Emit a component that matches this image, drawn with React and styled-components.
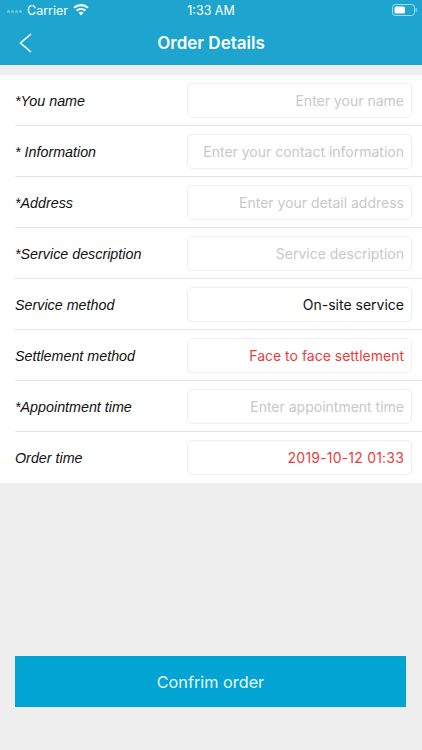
import React from 'react'
import styled, { createGlobalStyle } from 'styled-components'

const GlobalStyle = createGlobalStyle`
    html, body {
        margin: 0;
        padding: 0;
        background: #eeeeee;
        font-family: "Liberation Sans", Arial, sans-serif;
    }
    * {
        box-sizing: border-box;
    }
`

const Container = styled.div`
    width: 422px;
    height: 750px;
    display: flex;
    flex-direction: column;
    overflow: hidden;
`

const Header = styled.div`
    height: 65px;
    background-color: #1da5cf;
    color: white;
    flex-shrink: 0;
`

const StatusBar = styled.div`
    height: 20px;
    padding: 0 4px;
    display: grid;
    grid-template-columns: 1fr auto 1fr;
    align-items: center;
    font-size: 12.5px;
    font-family: Inter, sans-serif;
`

const StatusLeft = styled.div`
    display: flex;
    align-items: center;
    gap: 5px;
    padding-left: 3px;
`

const StatusRight = styled.div`
    display: flex;
    justify-content: flex-end;
`

const Dots = styled.div`
    display: flex;
    gap: 1px;
    margin-top: 3px;
`

const Dot = styled.span`
    width: 3px;
    height: 3px;
    border-radius: 50%;
    background-color: rgba(255, 255, 255, 0.35);
`

const NavBar = styled.div`
    height: 45px;
    position: relative;
    display: flex;
    align-items: center;
    justify-content: center;
`

const Back = styled.svg`
    position: absolute;
    left: 19px;
    top: 13px;
`

const Title = styled.div`
    font-size: 17px;
    font-weight: 600;
    font-family: Inter, sans-serif;
`

const Form = styled.div`
    margin-top: 10px;
    background-color: white;
    padding-left: 15px;
    flex-shrink: 0;
`

const Row = styled.div`
    height: 51px;
    display: flex;
    align-items: center;
    justify-content: space-between;
    padding-right: 10px;
    border-bottom: ${props => props.$last ? 'none' : '1px solid #e4e4e4'};
`

const Label = styled.span`
    font-size: 14.3px;
    font-style: italic;
    color: #111;
    margin-top: 1px;
`

const Field = styled.div`
    width: 225px;
    height: 35px;
    border: 1px solid #eeeeee;
    border-radius: 5px;
    padding: 0 7px;
    display: flex;
    align-items: center;
    justify-content: flex-end;
    font-size: 14px;
    font-family: Inter, sans-serif;
    letter-spacing: ${props => props.$spacing || 'normal'};
    color: ${props => props.$color || '#c8c8c8'};
`

const Footer = styled.div`
    flex: 1;
    display: flex;
    align-items: flex-end;
    padding: 0 16px 43px 15px;
`

const Button = styled.button`
    width: 100%;
    height: 51px;
    border: none;
    background-color: #02a4d3;
    color: #e6f7fc;
    font-size: 16.25px;
    font-family: Inter, sans-serif;
`

const Battery = () => (
    <svg width="26" height="12" viewBox="0 0 26 12">
        <rect x="0.5" y="0.5" width="22" height="11" rx="3" fill="none" stroke="white" strokeOpacity="0.6" />
        <rect x="2.5" y="2.5" width="10.5" height="7" rx="1.5" fill="white" />
        <rect x="23.5" y="4" width="1.2" height="4" rx="0.6" fill="white" fillOpacity="0.6" />
    </svg>
)

const Wifi = () => (
    <svg width="16" height="12" viewBox="0 0 16 12" fill="white">
        <path d="M8 11.5 L5.6 8.7 A3.6 3.6 0 0 1 10.4 8.7 Z" />
        <path d="M4.4 7.4 L3 5.8 A7.5 7.5 0 0 1 13 5.8 L11.6 7.4 A5.4 5.4 0 0 0 4.4 7.4 Z" />
        <path d="M1.9 4.5 L0.4 2.9 A11.4 11.4 0 0 1 15.6 2.9 L14.1 4.5 A9.3 9.3 0 0 0 1.9 4.5 Z" />
    </svg>
)

const rows = [
    { label: '*You name', value: 'Enter your name' },
    { label: '* Information', value: 'Enter your contact information' },
    { label: '*Address', value: 'Enter your detail address' },
    { label: '*Service description', value: 'Service description' },
    { label: 'Service method', value: 'On-site service', color: '#111' },
    { label: 'Settlement method', value: 'Face to face settlement', color: '#e8403c' },
    { label: '*Appointment time', value: 'Enter appointment time' },
    { label: 'Order time', value: '2019-10-12 01:33', color: '#e8403c', spacing: '0.2px' },
]

export default function App() {
    return (
        <Container>
            <GlobalStyle />
            <Header>
                <StatusBar>
                    <StatusLeft>
                        <Dots><Dot /><Dot /><Dot /><Dot /></Dots>
                        <span>Carrier</span>
                        <Wifi />
                    </StatusLeft>
                    <span>1:33 AM</span>
                    <StatusRight><Battery /></StatusRight>
                </StatusBar>
                <NavBar>
                    <Back width="14" height="20" viewBox="0 0 14 20" fill="none" stroke="white" strokeWidth="1.6">
                        <path d="M12 1 L1.5 10 L12 19" />
                    </Back>
                    <Title>Order Details</Title>
                </NavBar>
            </Header>
            <Form>
                {rows.map((row, i) => (
                    <Row key={row.label} $last={i === rows.length - 1}>
                        <Label>{row.label}</Label>
                        <Field $color={row.color} $spacing={row.spacing}>{row.value}</Field>
                    </Row>
                ))}
            </Form>
            <Footer>
                <Button>Confrim order</Button>
            </Footer>
        </Container>
    )
}
